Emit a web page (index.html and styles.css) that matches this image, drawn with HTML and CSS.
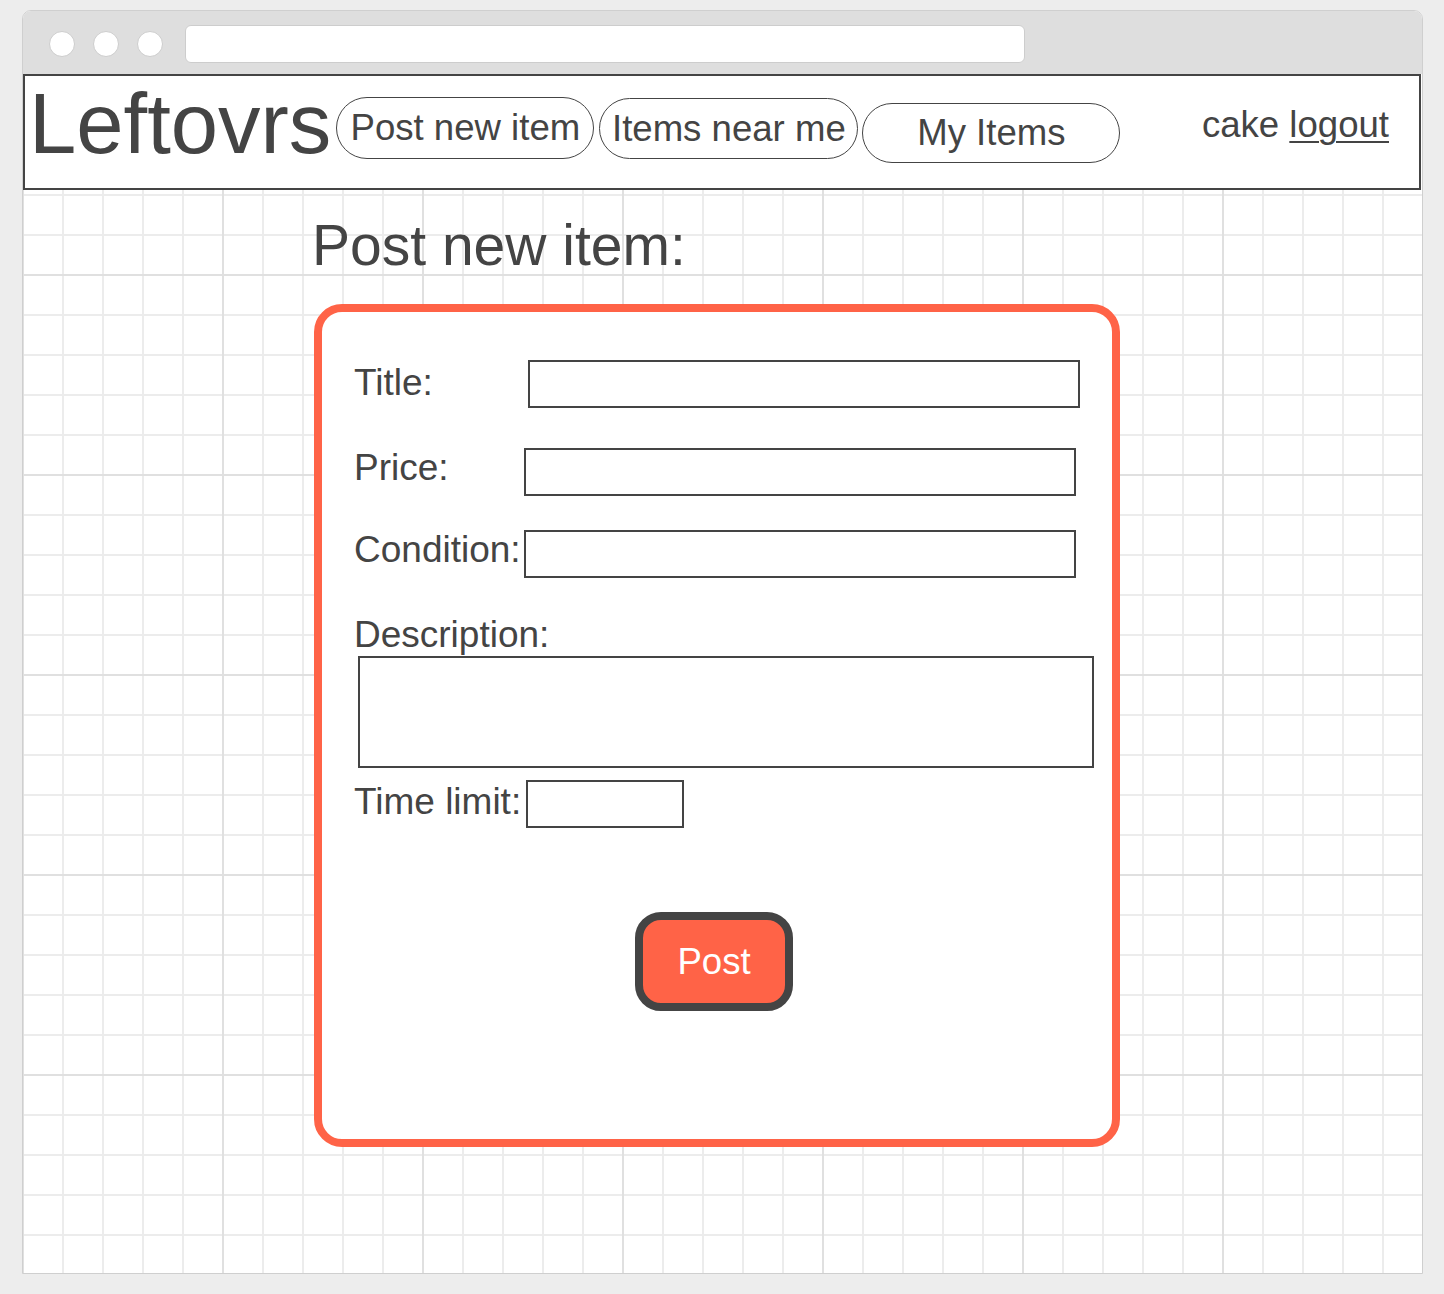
FILE: index.html
```html
<!DOCTYPE html>
<html lang="en">
<head>
<meta charset="utf-8">
<title>Leftovrs - Post new item</title>
<link rel="stylesheet" href="styles.css">
</head>
<body>
<div class="window">
  <div class="titlebar">
    <span class="dot"></span>
    <span class="dot"></span>
    <span class="dot"></span>
    <div class="urlbar"></div>
  </div>
  <header class="header">
    <div class="logo">Leftovrs</div>
    <a class="pill pill-post">Post new item</a>
    <a class="pill pill-near">Items near me</a>
    <a class="pill pill-mine">My Items</a>
    <div class="user">cake <a class="logout">logout</a></div>
  </header>
  <main class="canvas">
    <h1 class="page-title">Post new item:</h1>
    <form class="card">
      <div class="row row-title">
        <label class="label">Title:</label>
        <input class="field" type="text">
      </div>
      <div class="row row-price">
        <label class="label">Price:</label>
        <input class="field" type="text">
      </div>
      <div class="row row-condition">
        <label class="label">Condition:</label>
        <input class="field" type="text">
      </div>
      <label class="label desc-label">Description:</label>
      <textarea class="desc"></textarea>
      <div class="row row-time">
        <label class="label">Time limit:</label>
        <input class="field field-short" type="text">
      </div>
      <button class="post-btn" type="button">Post</button>
    </form>
  </main>
</div>
</body>
</html>
```
FILE: styles.css
```css
* { box-sizing: border-box; }

html, body {
  margin: 0;
  padding: 0;
}

body {
  background: #ededed;
  font-family: "Liberation Sans", Arial, sans-serif;
  color: #444;
}

.window {
  margin: 10px 0 0 22px;
  width: 1401px;
  height: 1264px;
  border: 1px solid #cfcfcf;
  border-radius: 9px 9px 0 0;
  display: flex;
  flex-direction: column;
  overflow: hidden;
  background: #fff;
}

/* browser chrome */
.titlebar {
  height: 63px;
  flex-shrink: 0;
  background: #dedede;
  display: flex;
  align-items: flex-start;
  padding: 14px 0 0 26px;
}

.dot {
  width: 26px;
  height: 26px;
  margin-top: 6px;
  margin-right: 18px;
  border-radius: 50%;
  background: #fff;
  border: 1px solid #cdcdcd;
}

.dot:nth-child(3) { margin-right: 22px; }

.urlbar {
  width: 840px;
  height: 38px;
  background: #fff;
  border: 1px solid #cdcdcd;
  border-radius: 6px;
}

/* app header */
.header {
  height: 116px;
  flex-shrink: 0;
  margin-right: 1px;
  border: 2px solid #444;
  background: #fff;
  display: flex;
  align-items: flex-start;
  padding-left: 4px;
}

.logo {
  font-size: 85px;
  line-height: 85px;
  margin-top: 5px;
  white-space: nowrap;
}

.pill {
  display: flex;
  align-items: center;
  justify-content: center;
  height: 62px;
  width: 258px;
  border: 1.5px solid #444;
  border-radius: 31px;
  font-size: 36.6px;
  line-height: 36px;
  white-space: nowrap;
  color: #444;
}

.pill-post { margin-left: 5px; margin-top: 21px; }
.pill-near { margin-left: 5px; margin-top: 22px; width: 259px; height: 61px; }
.pill-mine { margin-left: 4px; margin-top: 27px; height: 60px; }

.user {
  margin-left: auto;
  margin-right: 30px;
  margin-top: 31px;
  font-size: 36.6px;
  line-height: 36px;
  white-space: nowrap;
}

.logout {
  text-decoration: underline;
  text-decoration-thickness: 2px;
  text-underline-offset: 4px;
  color: #444;
}

/* grid canvas */
.canvas {
  flex: 1;
  padding: 27px 0 0 289px;
  background-color: #fff;
  background-image:
    linear-gradient(to right, #e0e0e0 2px, transparent 2px),
    linear-gradient(to bottom, #e0e0e0 2px, transparent 2px),
    linear-gradient(to right, #ececec 2px, transparent 2px),
    linear-gradient(to bottom, #ececec 2px, transparent 2px);
  background-size: 200px 100%, 100% 200px, 40px 100%, 100% 40px;
  background-position: -1px 0, 0 84px, -1px 0, 0 4px;
}

.page-title {
  margin: 0;
  font-weight: normal;
  font-size: 57px;
  line-height: 57px;
  white-space: nowrap;
}

.card {
  margin: 30px 0 0 2px;
  width: 806px;
  height: 843px;
  background: #fff;
  border: 8px solid #ff6347;
  border-radius: 28px;
  padding: 48px 0 0 32px;
  display: flex;
  flex-direction: column;
  align-items: flex-start;
}

.row {
  display: flex;
  align-items: flex-start;
}

.label {
  display: block;
  width: 170px;
  flex-shrink: 0;
  margin-top: 2px;
  font-size: 37px;
  line-height: 36px;
  white-space: nowrap;
}

.field {
  width: 552px;
  height: 48px;
  border: 2px solid #444;
  background: #fff;
  border-radius: 0;
  padding: 0;
  font: inherit;
}

.row-title .label { margin-top: 5px; }
.row-title .field { margin-left: 4px; }

.row-price { margin-top: 40px; }

.row-condition { margin-top: 34px; }

.desc-label {
  margin-top: 39px;
  width: auto;
}

.desc {
  margin: 3px 0 0 4px;
  width: 736px;
  height: 112px;
  border: 2px solid #444;
  border-radius: 0;
  resize: none;
  padding: 0;
}

.row-time { margin-top: 12px; }
.row-time .label { margin-top: 4px; }
.field-short { width: 158px; margin-left: 2px; }

.post-btn {
  margin: 84px 0 0 281px;
  width: 158px;
  height: 99px;
  background: #ff6347;
  border: 8px solid #444;
  border-radius: 26px;
  color: #fff;
  font-family: "Liberation Sans", Arial, sans-serif;
  font-size: 36.6px;
  line-height: 36px;
  padding: 0;
}
```
